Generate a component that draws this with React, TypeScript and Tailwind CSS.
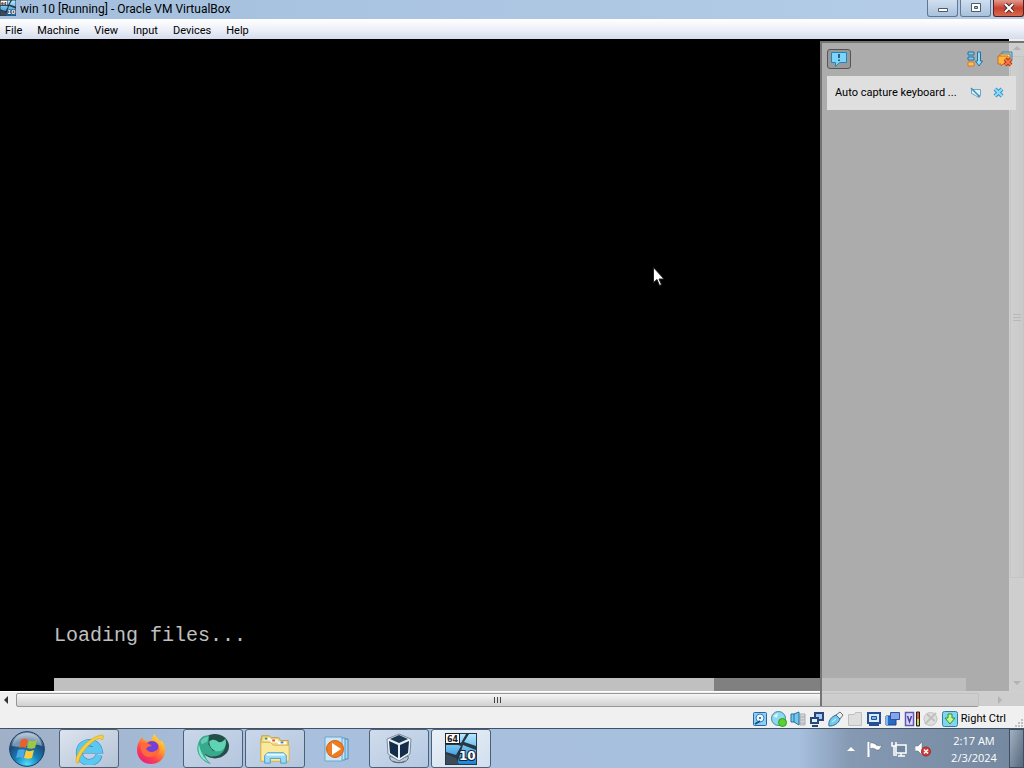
import type { ReactNode } from "react";

type IconProps = { className?: string };

const menus = ["File", "Machine", "View", "Input", "Devices", "Help"];

function GuestOsIcon({ className }: IconProps) {
  return (
    <svg viewBox="0 0 32 32" className={className} aria-hidden="true">
      <defs>
        <linearGradient id="guest" x1="0" y1="0" x2="0" y2="1">
          <stop offset="0" stopColor="#b4e8ff" />
          <stop offset="1" stopColor="#1785d8" />
        </linearGradient>
      </defs>
      <rect width="32" height="32" fill="#263746" />
      <path d="M14 1h7l-5 9-2-1zM24 1h7v12l-12-4zM1 12h12l3 1-5 9L1 19zM18 12l13 5v14H12z" fill="url(#guest)" />
      <path d="M1 21l10 4 3 6H1z" fill="#3d4c5a" />
      <rect x="0.5" y="0.5" width="14" height="10" fill="#fff" stroke="#222" />
      <text x="2" y="9" fontFamily="DejaVu Sans" fontWeight="bold" fontSize="8" fill="#222">64</text>
      <text x="14" y="27" fontFamily="DejaVu Sans" fontWeight="bold" fontSize="12" fill="#fff" stroke="#16222e" strokeWidth="2" paintOrder="stroke">10</text>
    </svg>
  );
}

function StartOrb() {
  return (
    <svg viewBox="0 0 36 36" className="size-9" aria-hidden="true">
      <defs>
        <radialGradient id="orb" cx="0.5" cy="0.95" r="0.9">
          <stop offset="0" stopColor="#4fe0ff" />
          <stop offset="0.4" stopColor="#147fb8" />
          <stop offset="0.75" stopColor="#1f4a78" />
          <stop offset="1" stopColor="#8ba6c2" />
        </radialGradient>
      </defs>
      <circle cx="18" cy="18" r="17.3" fill="url(#orb)" stroke="#173a5e" />
      <path d="M3 15C5 5 12 2 18 2s13 3 15 13c-9-4-20 3-30 0z" fill="#fff" opacity="0.4" />
      <path d="M12 9c3-2 5-1 7 0l-2 8c-3-1-5-1-7 0z" fill="#e8602c" />
      <path d="M20 9c3 2 5 1 8 0l-2 8c-3 1-5 1-8 0z" fill="#9cc843" />
      <path d="M9 19c3-1 5-1 7 0l-2 8c-3-1-5-1-7 0z" fill="#4aa8e6" />
      <path d="M17 19c3 2 5 1 8 0l-2 8c-3 1-5 1-8 0z" fill="#ffcb3a" />
    </svg>
  );
}

function ExplorerIcon() {
  return (
    <svg viewBox="0 0 32 32" className="size-8" aria-hidden="true">
      <path d="M26 22A10 10 0 1 1 26 17H10" fill="none" stroke="#2585c4" strokeWidth="7" />
      <path d="M26 22A10 10 0 1 1 26 17H10" fill="none" stroke="#5cc8f2" strokeWidth="6" />
      <path d="M4 30C-1 24 14 4 29 2c2 0 2 3 0 5-1-3-7-1-13 5C9 19 5 26 6 30z" fill="#f8cf3c" stroke="#d89d1c" strokeWidth="0.6" />
    </svg>
  );
}

function FirefoxIcon() {
  return (
    <svg viewBox="0 0 32 32" className="size-8" aria-hidden="true">
      <defs>
        <linearGradient id="fox" x1="0.9" y1="0" x2="0.2" y2="1">
          <stop offset="0" stopColor="#fff04a" />
          <stop offset="0.4" stopColor="#ff9a2c" />
          <stop offset="0.7" stopColor="#ff4050" />
          <stop offset="1" stopColor="#e11b82" />
        </linearGradient>
      </defs>
      <path d="M5 7l2-3c1 3 3 4 5 4 2-1 4-1 5-1 0-3 1-5 3-6 1 4 4 4 5 8l1-2c3 3 5 7 4 12C29 27 23 31 16 31 8 31 2 25 2 17c0-4 1-7 3-10z" fill="url(#fox)" />
      <circle cx="17" cy="15" r="7" fill="#7540d8" />
      <path d="M6 10c4-1 8 0 11 3-3 0-5 1-6 3 2 3 6 4 9 2 3-1 4-4 3-7 2 4 2 8-1 10-4 4-11 4-14 0-2-3-3-7-2-11z" fill="#ff6a3c" />
    </svg>
  );
}

function OrbIcon() {
  return (
    <svg viewBox="0 0 34 34" className="size-8" aria-hidden="true">
      <ellipse cx="19" cy="14" rx="15" ry="13" fill="#234f4a" />
      <path d="M1 12C3 4 8 2 13 3l-1 9 5 7 8-3 5-3c0 7-6 12-13 12-4 0-6-1-8-3-1 4 2 7 6 11C5 31-2 21 1 12z" fill="#38a98c" />
      <path d="M13 9c3-3 7-2 9 0s6 0 8-3c2 5 0 11-5 13-6 2-12-3-12-10z" fill="#5fd3b4" />
      <path d="M2 12c2 9 5 14 10 19C4 28 0 20 2 12z" fill="#8be8d0" />
      <path d="M4 9c2-4 5-5 8-5l-1 5-6 3z" fill="#64cdb0" />
    </svg>
  );
}

function FolderIcon() {
  return (
    <svg viewBox="0 0 34 32" className="size-8" aria-hidden="true">
      <path d="M3 5V2h8l2 2h8l2 3h8v22H2V5z" fill="#f3d779" stroke="#c69a3a" />
      <path d="M5 4h7v3H5zM12 6h8v3h-8zM20 8h9v3h-9z" fill="#fff" />
      <path d="M6 4h3v2H6z" fill="#32a040" />
      <path d="M14 6h3v2h-3z" fill="#d65436" />
      <path d="M23 8h3v2h-3z" fill="#3f82cc" />
      <path d="M2 9h10l3 3h17v17H2z" fill="#fae99d" stroke="#d7b65a" />
      <path d="M6 31v-8l3-3h17l3 3v8h-6v-5H12v5z" fill="#9bdcf7" stroke="#4c9bcc" />
      <path d="M8 22h19" stroke="#e8faff" strokeWidth="2" />
    </svg>
  );
}

function MediaPlayerIcon() {
  return (
    <svg viewBox="0 0 32 32" className="size-8" aria-hidden="true">
      <path d="M12 6h15v20H12z" fill="#acd4ee" stroke="#4d8cba" />
      <path d="M8 5h16v22H8z" fill="#bfe2f7" stroke="#5596c2" />
      <path d="M4 4h17v24H4z" fill="#c9e7f8" stroke="#6fa5c9" />
      <circle cx="14" cy="16" r="8.500" fill="#f17c20" stroke="#cf6015" />
      <path d="M11 10l9 6-9 6z" fill="#fff" />
    </svg>
  );
}

function VirtualBoxIcon() {
  return (
    <svg viewBox="0 0 32 32" className="size-8" aria-hidden="true">
      <path d="M7 23c-3 9 21 9 18 0l-9 4z" fill="#bdc9d4" stroke="#526b80" />
      <path d="M10 28c3 2 9 2 12 0" fill="none" stroke="#526b80" />
      <path d="M16 1l12 5-1 15-11 7-11-7L4 6z" fill="#e9f0f5" stroke="#788b9c" strokeLinejoin="round" />
      <path d="M16 2l9 4-9 4-9-4z" fill="#1c3853" />
      <path d="M6 8l9 4v13l-8-5z" fill="#132d4a" />
      <path d="M26 8l-9 4v13l8-5z" fill="#132d4a" />
    </svg>
  );
}

const apps: { name: string; icon: ReactNode; look: string }[] = [
  { name: "Internet Explorer", icon: <ExplorerIcon />, look: "border-[#4e6076] bg-linear-to-br from-[#dce4ee] to-[#b5c3d6]" },
  { name: "Firefox", icon: <FirefoxIcon />, look: "border-transparent" },
  { name: "Browser", icon: <OrbIcon />, look: "border-[#4e6076] bg-linear-to-br from-[#c9d7e9] to-[#b4c6de]" },
  { name: "Windows Explorer", icon: <FolderIcon />, look: "border-[#4e6076] bg-linear-to-br from-[#c9d7e9] to-[#b4c6de]" },
  { name: "Media Player", icon: <MediaPlayerIcon />, look: "border-transparent" },
  { name: "VirtualBox Manager", icon: <VirtualBoxIcon />, look: "border-[#4e6076] bg-linear-to-br from-[#d0dcec] to-[#b4c8e2]" },
  { name: "win 10", icon: <GuestOsIcon className="size-8" />, look: "border-[#4e6076] bg-linear-to-br from-[#e9f0f8] to-[#d2dfee]" },
];

const indicators: { name: string; drawing: ReactNode }[] = [
  {
    name: "Hard disks",
    drawing: (
      <>
        <rect x="1.500" y="1.500" width="13" height="13" rx="1" fill="#8bd0f4" stroke="#2868a8" />
        <circle cx="8" cy="7" r="4" fill="#e9f8ff" stroke="#3c80b8" />
        <circle cx="8" cy="7" r="1" fill="#184e86" />
        <path d="M3 13l5-3" stroke="#184e86" strokeWidth="2" />
      </>
    ),
  },
  {
    name: "Optical drives",
    drawing: (
      <>
        <circle cx="7.500" cy="7.500" r="7" fill="#8ed8ef" stroke="#3d8aa6" />
        <path d="M2 5l4 2 1-5" fill="#d9f5fd" />
        <circle cx="11.500" cy="11.500" r="4" fill="#5bd12f" stroke="#2f9a24" />
      </>
    ),
  },
  {
    name: "Audio",
    drawing: (
      <>
        <path d="M10 3h5v11h-5z" fill="#d4d7da" stroke="#a9adb2" />
        <path d="M10 6h5M10 9h5M10 12h5" stroke="#a9adb2" />
        <path d="M1 3h3l5-2v13l-5-3H1z" fill="#72c8ee" stroke="#2b6f9e" />
        <path d="M4 3v8" stroke="#2b6f9e" />
      </>
    ),
  },
  {
    name: "Network",
    drawing: (
      <>
        <path d="M6 2h8v7H6z" fill="#a6c9ee" stroke="#29477f" strokeWidth="2" />
        <path d="M2 7h7v5H2zM3 15h6" fill="#e4f0fc" stroke="#29477f" strokeWidth="2" />
      </>
    ),
  },
  {
    name: "USB",
    drawing: (
      <>
        <path d="M8 4l4-3 3 3-3 4z" fill="#eee" stroke="#64717c" />
        <path d="M1 15c-1-5 2-9 7-11l4 4c-2 5-6 7-11 7z" fill="#74c9ec" stroke="#276f9d" />
        <path d="M4 11l4-3" stroke="#d8f5ff" />
      </>
    ),
  },
  {
    name: "Shared folders",
    drawing: <path d="M1.500 3.500h6l1-2h6v13h-13z" fill="#dedede" stroke="#bfbfbf" />,
  },
  {
    name: "Display",
    drawing: (
      <>
        <path d="M2 2h12v10H2z" fill="#d7ecff" stroke="#254e94" strokeWidth="2" />
        <path d="M5.500 5.500h5v3h-5z" fill="#75b9ec" stroke="#254e94" />
        <path d="M3 14h10" stroke="#254e94" strokeWidth="2" />
      </>
    ),
  },
  {
    name: "Recording",
    drawing: (
      <>
        <path d="M1 5h10v9H1z" fill="#276bc4" stroke="#244386" />
        <path d="M1 5h2v9H1z" fill="#74bdf2" />
        <path d="M5.500 1.500h9v7h-9z" fill="#82a8eb" stroke="#3452a4" />
      </>
    ),
  },
  {
    name: "Processor",
    drawing: (
      <>
        <path d="M1.500 1.500h8v13h-8z" fill="#dcd8ff" stroke="#5f57b4" strokeWidth="1.500" />
        <path d="M3.500 5l2 6 2-6" fill="none" stroke="#49419b" strokeWidth="1.500" />
        <path d="M12.500 1h3v14h-3z" fill="#e25832" stroke="#222" />
        <path d="M13 8h2v6h-2z" fill="#b7d756" />
      </>
    ),
  },
  {
    name: "Mouse integration",
    drawing: (
      <>
        <circle cx="7.500" cy="8" r="6.500" fill="#dedede" stroke="#c0c0c0" />
        <path d="M2 13L13 2M4 3l4 4 4 3" fill="none" stroke="#c0c0c0" strokeWidth="2" />
      </>
    ),
  },
  {
    name: "Keyboard",
    drawing: (
      <>
        <rect x="0.500" y="0.500" width="15" height="15" rx="2" fill="#83d4f1" stroke="#327da5" />
        <path d="M6 3h4v4h3l-5 6-5-6h3z" fill="#c8f78c" stroke="#28963a" />
      </>
    ),
  },
];

function TitleBar() {
  const button =
    "flex h-[17px] w-[31px] items-center justify-center rounded-b-[3px] border border-t-0 border-[#60778f] bg-linear-to-b from-[#d0dfef] to-[#a9c1dc]";

  return (
    <header className="flex h-[19px] shrink-0 items-start justify-between bg-linear-to-r from-[#a3bfdd] to-[#b5cde8]">
      <div className="flex h-full items-start gap-1">
        <GuestOsIcon className="size-4" />
        <h1 className="font-['Roboto',sans-serif] text-[12px] leading-[18px] whitespace-nowrap">win 10 [Running] - Oracle VM VirtualBox</h1>
      </div>
      <div className="flex gap-[2px]">
        <button type="button" aria-label="Minimize" className={button}>
          <svg viewBox="0 0 12 10" className="h-[10px] w-3">
            <path d="M1.500 5.500h9v3h-9z" fill="#fff" stroke="#4c596b" />
          </svg>
        </button>
        <button type="button" aria-label="Restore" className={button}>
          <svg viewBox="0 0 12 10" className="h-[10px] w-3">
            <path d="M1.500 0.500h9v8h-9z" fill="#fff" stroke="#4c596b" />
            <path d="M4.500 3.500h3v2h-3z" fill="#a9c1dc" stroke="#4c596b" />
          </svg>
        </button>
        <button
          type="button"
          aria-label="Close"
          className="flex h-[17px] w-[31px] items-center justify-center rounded-b-[3px] border border-t-0 border-[#591c20] bg-linear-to-b from-[#df9a8d] via-[#c7402e] to-[#d66a4d]"
        >
          <svg viewBox="0 0 12 10" className="h-[10px] w-3">
            <path d="M2 1l8 8M10 1L2 9" stroke="#4b2832" strokeWidth="4" />
            <path d="M2 1l8 8M10 1L2 9" stroke="#fff" strokeWidth="2" />
          </svg>
        </button>
      </div>
    </header>
  );
}

function MenuBar() {
  return (
    <nav className="flex h-5 shrink-0 items-end gap-[15px] bg-linear-to-b from-white via-[#eef1f9] to-[#d5dcec] px-[5px] font-['Roboto',sans-serif] text-[11px] leading-4">
      {menus.map((menu) => (
        <button key={menu} type="button">
          {menu}
        </button>
      ))}
    </nav>
  );
}

function NotificationPanel() {
  return (
    <aside className="absolute top-[2px] right-0 bottom-[2px] w-[204px] border-t-2 border-l-2 border-[#747474] bg-[#c8c8c8]/86 pt-[2px] pl-[5px]">
      <div className="flex h-[27px] items-center gap-[14px] pr-[11px]">
        <button
          type="button"
          aria-label="Show notifications"
          className="mr-auto flex h-5 w-6 items-center justify-center rounded-[3px] border border-[#555] bg-[#999]"
        >
          <svg viewBox="0 0 16 16" className="size-4">
            <path d="M0.500 1.500h15v10h-7l-4 4v-4h-4z" fill="#7bd5fa" stroke="#2585b8" />
            <path d="M8 3v4M8 8.500v1.500" stroke="#173b55" strokeWidth="1.500" />
          </svg>
        </button>
        <button type="button" aria-label="Sort notifications">
          <svg viewBox="0 0 16 16" className="size-4">
            <path d="M1 1h6v3H1zM1 6h6v3H1z" fill="#78caef" stroke="#2a719e" />
            <path d="M1 11h6v4H1z" fill="#ffc150" stroke="#d3792c" />
            <path d="M10.500 1h3v9h2l-3.500 5-3.500-5h2z" fill="#91dcfa" stroke="#25719e" />
          </svg>
        </button>
        <button type="button" aria-label="Remove notifications">
          <svg viewBox="0 0 16 16" className="size-4">
            <path d="M5 1h10v8H5z" fill="#8ed0ee" stroke="#3e83a8" />
            <path d="M3 3h10v8H3z" fill="#ffe08a" stroke="#b4702d" />
            <path d="M1 5h10v8H6l-2 2v-2H1z" fill="#ffb941" stroke="#cc6d22" />
            <path d="M8 8l6 6M14 8l-6 6" stroke="#aa381c" strokeWidth="4" />
            <path d="M8 8l6 6M14 8l-6 6" stroke="#fa7544" strokeWidth="2" />
          </svg>
        </button>
      </div>
      <div className="mt-1 mr-2 flex h-[34px] items-center gap-[11px] bg-[#dfdfdf] pr-[11px] pl-2">
        <p className="flex-1 font-['Roboto',sans-serif] text-[11px] leading-4 whitespace-nowrap">Auto capture keyboard ...</p>
        <button type="button" aria-label="Do not show again">
          <svg viewBox="0 0 12 12" className="size-3">
            <path d="M1.500 2.500h9v6h-2v2l-3-2-4-2z" fill="#d8f1fb" stroke="#6aa8c7" />
            <path d="M1 1l9 9" stroke="#4a8dae" strokeWidth="1.500" />
          </svg>
        </button>
        <button type="button" aria-label="Close notification">
          <svg viewBox="0 0 12 12" className="size-3">
            <path d="M2 2l7 7M9 2L2 9" stroke="#3b91c3" strokeWidth="4" />
            <path d="M2 2l7 7M9 2L2 9" stroke="#8ddbfa" strokeWidth="2" />
          </svg>
        </button>
      </div>
    </aside>
  );
}

function GuestScreen() {
  return (
    <main className="relative flex min-h-0 flex-1 flex-col bg-[#f0f0f0]">
      <div className="flex min-h-0 flex-1">
        <section className="relative flex flex-1 flex-col justify-end bg-black pr-[43px] pl-[54px]">
          <p className="mb-[30px] font-['Liberation_Mono',monospace] text-[20px] leading-6 text-[#c0c0c0]">Loading files...</p>
          <div role="progressbar" aria-valuenow={72} aria-label="Loading files" className="h-[13px] bg-[#808080]">
            <div className="h-full bg-[#c0c0c0]" style={{ width: "72.4%" }} />
          </div>
          <svg viewBox="0 0 12 19" className="absolute top-[228px] left-[653px] h-[19px] w-3" aria-hidden="true">
            <path d="M0.500 0.500v15l3.500-3 2.500 6 2-1-2.500-5.500h5z" fill="#fff" stroke="#222" />
          </svg>
        </section>
        <div className="flex w-[15px] flex-col items-center border-l border-white bg-[#eee]">
          <div className="flex h-[17px] items-center">
            <svg viewBox="0 0 8 4" className="h-1 w-2" aria-hidden="true">
              <path d="M4 0l4 4H0z" fill="#333" />
            </svg>
          </div>
          <div className="flex h-4/5 w-full items-center justify-center border border-[#aaa] bg-linear-to-r from-[#f6f6f6] to-[#d0d0d0]">
            <svg viewBox="0 0 8 8" className="size-2" aria-hidden="true">
              <path d="M0 1.500h8M0 4.500h8M0 7.500h8" stroke="#555" />
            </svg>
          </div>
          <svg viewBox="0 0 8 4" className="mt-auto mb-[6px] h-1 w-2" aria-hidden="true">
            <path d="M0 0h8L4 4z" fill="#333" />
          </svg>
        </div>
      </div>
      <div className="flex h-[17px] items-center gap-2 border-t border-white pr-[22px] pl-1">
        <svg viewBox="0 0 4 8" className="h-2 w-1" aria-hidden="true">
          <path d="M4 0v8L0 4z" fill="#333" />
        </svg>
        <div className="mr-[11px] flex h-[14px] flex-1 items-center justify-center rounded-[2px] border border-[#979797] bg-linear-to-b from-[#f6f6f6] to-[#d0d0d0]">
          <svg viewBox="0 0 8 6" className="h-[6px] w-2" aria-hidden="true">
            <path d="M0.500 0v6M3.500 0v6M6.500 0v6" stroke="#444" />
          </svg>
        </div>
        <svg viewBox="0 0 4 8" className="h-2 w-1" aria-hidden="true">
          <path d="M0 0v8l4-4z" fill="#333" />
        </svg>
      </div>
      <NotificationPanel />
    </main>
  );
}

function StatusBar() {
  return (
    <footer className="relative flex h-5 shrink-0 items-center justify-end gap-[3px] bg-[#f0f0f0] pt-px pr-[18px]">
      {indicators.map((indicator) => (
        <button key={indicator.name} type="button" aria-label={indicator.name}>
          <svg viewBox="0 0 16 16" className="size-4">
            {indicator.drawing}
          </svg>
        </button>
      ))}
      <span className="font-['Roboto',sans-serif] text-[11px] leading-4">Right Ctrl</span>
      <svg viewBox="0 0 10 10" className="absolute right-0 bottom-0 size-[10px]" aria-hidden="true">
        <path d="M7 1h2v2H7zM4 4h2v2H4zM7 4h2v2H7zM1 7h2v2H1zM4 7h2v2H4zM7 7h2v2H7z" fill="#c0c0c0" />
      </svg>
    </footer>
  );
}

function Taskbar() {
  return (
    <div className="flex h-10 shrink-0 items-center border-t border-[#3e5168] bg-[linear-gradient(90deg,#9fb0c7_0%,#a8c0de_25%,#a7c0de_78%,#8599b2_83%,#73879f_100%)]">
      <button type="button" aria-label="Start" className="mx-[9px]">
        <StartOrb />
      </button>
      <div className="ml-[5px] flex gap-[2px]">
        {apps.map((app) => (
          <button
            key={app.name}
            type="button"
            aria-label={app.name}
            className={`flex h-[39px] w-[60px] items-center justify-center rounded-[3px] border ${app.look}`}
          >
            {app.icon}
          </button>
        ))}
      </div>
      <div className="ml-auto flex h-full items-center gap-2 text-white">
        <button type="button" aria-label="Show hidden icons" className="mr-1">
          <svg viewBox="0 0 8 4" className="h-1 w-2">
            <path d="M4 0l4 4H0z" fill="#fff" />
          </svg>
        </button>
        <button type="button" aria-label="Action Center">
          <svg viewBox="0 0 16 16" className="size-4">
            <path d="M1.500 1v15" stroke="#fff" strokeWidth="2" />
            <path d="M3 2c3-1 4 1 6 1v1c2 1 4 1 6 0-1 2-2 4-3 5-2 0-3 0-4-1-2-1-3-1-5 0z" fill="#fff" stroke="#4b5d73" strokeWidth="0.500" />
          </svg>
        </button>
        <button type="button" aria-label="Network">
          <svg viewBox="0 0 16 16" className="size-4">
            <path d="M5 4h10v8H5z" fill="#71859c" stroke="#fff" strokeWidth="1.500" />
            <path d="M7 15h7M10 12v3M1 1v4h4V1M3 5v9h3" fill="none" stroke="#fff" strokeWidth="1.500" />
          </svg>
        </button>
        <button type="button" aria-label="Volume">
          <svg viewBox="0 0 16 16" className="size-4">
            <path d="M0 5h3l4-4v13l-4-4H0z" fill="#fff" stroke="#55687f" strokeWidth="0.500" />
            <circle cx="11" cy="10.500" r="4.500" fill="#d83b35" stroke="#942c2c" />
            <path d="M9 8.500l4 4M13 8.500l-4 4" stroke="#fff" strokeWidth="1.500" />
          </svg>
        </button>
        <time className="ml-2 w-[54px] text-center font-['Open_Sans',sans-serif] text-[11px] leading-[17px] whitespace-nowrap">
          2:17 AM
          <br />
          2/3/2024
        </time>
        <button
          type="button"
          aria-label="Show desktop"
          className="h-full w-[15px] border border-[#3e4f63] bg-linear-to-br from-[#a3b1c1] to-[#56687d]"
        />
      </div>
    </div>
  );
}

export default function App() {
  return (
    <div className="flex h-screen flex-col overflow-hidden bg-black font-['Noto_Sans',sans-serif] text-black">
      <TitleBar />
      <MenuBar />
      <GuestScreen />
      <StatusBar />
      <Taskbar />
    </div>
  );
}
